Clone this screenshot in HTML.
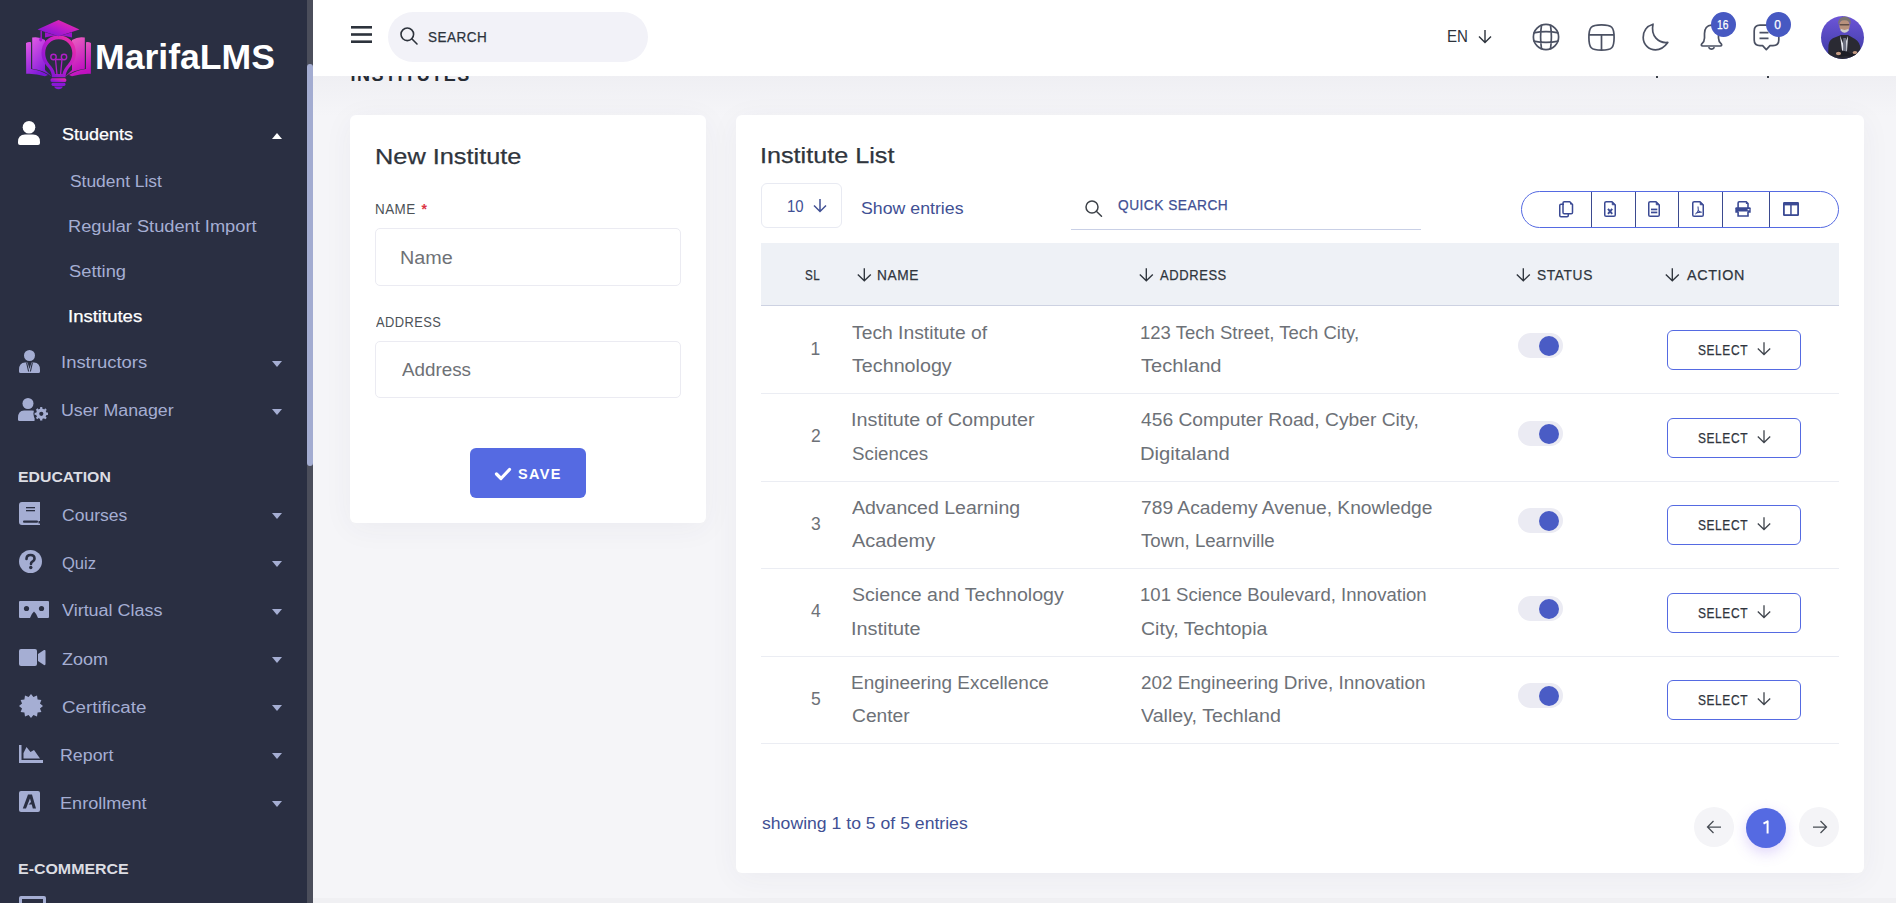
<!DOCTYPE html>
<html><head><meta charset="utf-8"><title>Institutes</title>
<style>
html,body{margin:0;padding:0;}
body{width:1896px;height:903px;position:relative;overflow:hidden;background:#f5f5f8;font-family:"Liberation Sans", sans-serif;}
.t{position:absolute;white-space:nowrap;}
svg{display:block;overflow:visible}
</style></head><body>
<div style="position:absolute;left:313px;top:76px;width:1583px;height:827px;background:#f5f5f8"></div>
<div style="position:absolute;left:313px;top:76px;width:1583px;height:40px;background:linear-gradient(#efeff3,rgba(245,245,248,0))"></div>
<div style="position:absolute;left:313px;top:898px;width:1583px;height:5px;background:#f0f0f3"></div>
<div style="position:absolute;left:0px;top:0px;width:307px;height:903px;background:#2a2f42"></div>
<div style="position:absolute;left:307px;top:0px;width:6px;height:903px;background:#4b4e5b"></div>
<div style="position:absolute;left:307px;top:64px;width:6px;height:402px;background:#a3acd1;border-radius:3px"></div>
<svg style="position:absolute;left:15px;top:10px;" width="90" height="90" viewBox="0 0 900 900">
<defs>
<linearGradient id="lg1" x1="0" y1="1" x2="1" y2="0"><stop offset="0" stop-color="#6c14d8"/><stop offset="0.55" stop-color="#c21cc8"/><stop offset="1" stop-color="#f5349c"/></linearGradient>
<linearGradient id="lg2" x1="0" y1="0" x2="0.6" y2="1"><stop offset="0" stop-color="#e25ae6"/><stop offset="1" stop-color="#7a16d8"/></linearGradient>
<linearGradient id="lg3" x1="0" y1="0" x2="0.3" y2="1"><stop offset="0" stop-color="#f06ac0"/><stop offset="1" stop-color="#c010c0"/></linearGradient>
</defs>
<path d="M110 330 Q130 318 160 322 L160 590 Q250 598 330 650 L300 662 Q200 632 112 638 Z" fill="url(#lg2)"/>
<path d="M760 330 Q740 318 710 322 L710 590 Q620 598 540 650 L570 662 Q670 632 758 638 Z" fill="url(#lg3)"/>
<path d="M172 275 Q240 262 300 300 L300 600 Q330 630 370 668 Q280 600 172 588 Z" fill="url(#lg2)"/>
<path d="M698 275 Q630 262 570 300 L570 600 Q540 630 500 668 Q590 600 698 588 Z" fill="url(#lg3)"/>
<path d="M435 255 C330 255 265 330 265 430 C265 500 300 540 335 580 C360 610 368 640 370 672 L505 672 C507 640 515 610 540 580 C575 540 610 500 610 430 C610 330 540 255 435 255 Z" fill="url(#lg1)"/>
<path d="M437 292 C360 292 302 350 302 430 C302 490 330 525 360 560 C385 590 395 615 400 640 L475 640 C480 615 490 590 515 560 C545 525 573 490 573 430 C573 350 515 292 437 292 Z" fill="#2a2f42"/>
<circle cx="385" cy="470" r="27" fill="none" stroke="#b01ec8" stroke-width="14"/>
<circle cx="490" cy="470" r="27" fill="none" stroke="#b01ec8" stroke-width="14"/>
<path d="M405 492 L420 650 M470 492 L455 650 M410 495 L465 495" fill="none" stroke="#b01ec8" stroke-width="13"/>
<rect x="355" y="682" width="158" height="38" rx="16" fill="url(#lg1)"/>
<rect x="365" y="728" width="140" height="32" rx="14" fill="#8a18d6"/>
<path d="M392 766 L478 766 Q470 792 435 792 Q400 792 392 766 Z" fill="#8a18d6"/>
<path d="M225 195 L435 100 L645 195 L435 262 Z" fill="url(#lg1)"/>
<path d="M300 222 L300 275 Q435 235 570 275 L570 222 L435 262 Z" fill="#9c14cc"/>
<path d="M262 210 L262 282" stroke="#a018d0" stroke-width="14"/>
<ellipse cx="258" cy="296" rx="16" ry="20" fill="#a018d0"/>
</svg>
<div class="t" style="left:94.97px;top:39.43px;font-size:35px;line-height:35px;color:#fff;font-weight:700;letter-spacing:0px;transform:scaleX(1.0166);transform-origin:0 0;">MarifaLMS</div>
<svg style="position:absolute;left:18px;top:121px;" width="22" height="24" viewBox="0 0 22 24"><circle cx="11" cy="6.3" r="6.3" fill="#fff"/><path d="M0 21 Q0 13.5 7 13.5 L15 13.5 Q22 13.5 22 21 L22 22 Q22 24 20 24 L2 24 Q0 24 0 22Z" fill="#fff"/></svg>
<div class="t" style="left:62.00px;top:126.71px;font-size:16px;line-height:16px;color:#fff;font-weight:400;letter-spacing:0px;transform:scaleX(1.1242);transform-origin:0 0;-webkit-text-stroke:0.25px currentColor;">Students</div>
<svg style="position:absolute;left:272px;top:132.5px;" width="10" height="6" viewBox="0 0 10 6"><path d="M0 6 L5 0 L10 6Z" fill="#fff"/></svg>
<div class="t" style="left:69.50px;top:173.71px;font-size:16px;line-height:16px;color:#a5aed3;font-weight:400;letter-spacing:0px;transform:scaleX(1.0875);transform-origin:0 0;">Student List</div>
<div class="t" style="left:67.86px;top:219.31px;font-size:16px;line-height:16px;color:#a5aed3;font-weight:400;letter-spacing:0px;transform:scaleX(1.1396);transform-origin:0 0;">Regular Student Import</div>
<div class="t" style="left:69.00px;top:264.31px;font-size:16px;line-height:16px;color:#a5aed3;font-weight:400;letter-spacing:0px;transform:scaleX(1.1449);transform-origin:0 0;">Setting</div>
<div class="t" style="left:67.84px;top:309.41px;font-size:16px;line-height:16px;color:#fff;font-weight:400;letter-spacing:0px;transform:scaleX(1.1582);transform-origin:0 0;-webkit-text-stroke:0.25px currentColor;">Institutes</div>
<svg style="position:absolute;left:19px;top:350px;" width="21" height="23" viewBox="0 0 21 23"><circle cx="10.5" cy="5.5" r="5.5" fill="#a5aed3"/><path d="M0 20 Q0 12.5 6 12.5 L8.5 12.5 L10.5 19 L12.5 12.5 L15 12.5 Q21 12.5 21 20 L21 21.5 Q21 23 19.5 23 L1.5 23 Q0 23 0 21.5Z" fill="#a5aed3"/><path d="M7.6 12.6 L9.6 21.5 M13.4 12.6 L11.4 21.5" stroke="#2a2f42" stroke-width="1.1"/></svg>
<div class="t" style="left:60.55px;top:354.71px;font-size:16px;line-height:16px;color:#a5aed3;font-weight:400;letter-spacing:0px;transform:scaleX(1.1535);transform-origin:0 0;">Instructors</div>
<svg style="position:absolute;left:272px;top:360.5px;" width="10" height="6" viewBox="0 0 10 6"><path d="M0 0 L5 6 L10 0Z" fill="#a5aed3"/></svg>
<svg style="position:absolute;left:18px;top:398px;" width="31" height="23" viewBox="0 0 31 23"><circle cx="10" cy="5.5" r="5.5" fill="#a5aed3"/><path d="M0 20 Q0 12.5 6 12.5 L14 12.5 Q16 12.5 17 13.2 L16.5 23 L1.5 23 Q0 23 0 21.5Z" fill="#a5aed3"/><circle cx="23.3" cy="15.8" r="7.9" fill="#2a2f42"/><polygon points="29.87,17.11 28.36,16.98 28.32,17.15 28.28,17.31 28.22,17.47 28.17,17.63 28.10,17.79 28.04,17.95 27.96,18.10 27.89,18.25 27.80,18.40 27.72,18.55 27.62,18.69 28.75,19.70 28.62,19.88 28.48,20.05 28.34,20.22 28.19,20.38 28.04,20.54 27.88,20.69 27.72,20.84 27.55,20.98 27.38,21.12 27.20,21.25 27.02,21.37 26.05,20.22 25.90,20.30 25.75,20.39 25.60,20.46 25.45,20.54 25.29,20.60 25.13,20.67 24.97,20.72 24.81,20.78 24.65,20.82 24.48,20.86 24.31,20.90 24.39,22.41 24.17,22.44 23.96,22.47 23.74,22.49 23.52,22.50 23.30,22.50 23.08,22.50 22.86,22.49 22.64,22.47 22.43,22.44 22.21,22.41 21.99,22.37 22.12,20.86 21.95,20.82 21.79,20.78 21.63,20.72 21.47,20.67 21.31,20.60 21.15,20.54 21.00,20.46 20.85,20.39 20.70,20.30 20.55,20.22 20.41,20.12 19.40,21.25 19.22,21.12 19.05,20.98 18.88,20.84 18.72,20.69 18.56,20.54 18.41,20.38 18.26,20.22 18.12,20.05 17.98,19.88 17.85,19.70 18.98,18.69 18.88,18.55 18.80,18.40 18.71,18.25 18.64,18.10 18.56,17.95 18.50,17.79 18.43,17.63 18.38,17.47 18.32,17.31 18.28,17.15 18.24,16.98 18.20,16.81 16.69,16.89 16.66,16.67 16.63,16.46 16.61,16.24 16.60,16.02 16.60,15.80 16.60,15.58 16.61,15.36 16.63,15.14 16.66,14.93 16.69,14.71 18.20,14.79 18.24,14.62 18.28,14.45 18.32,14.29 18.38,14.13 18.43,13.97 18.50,13.81 18.56,13.65 18.64,13.50 18.71,13.35 18.80,13.20 18.88,13.05 18.98,12.91 17.85,11.90 17.98,11.72 18.12,11.55 18.26,11.38 18.41,11.22 18.56,11.06 18.72,10.91 18.88,10.76 19.05,10.62 19.22,10.48 19.40,10.35 19.58,10.23 20.55,11.38 20.70,11.30 20.85,11.21 21.00,11.14 21.15,11.06 21.31,11.00 21.47,10.93 21.63,10.88 21.79,10.82 21.95,10.78 22.12,10.74 21.99,9.23 22.21,9.19 22.43,9.16 22.64,9.13 22.86,9.11 23.08,9.10 23.30,9.10 23.52,9.10 23.74,9.11 23.96,9.13 24.17,9.16 24.39,9.19 24.31,10.70 24.48,10.74 24.65,10.78 24.81,10.82 24.97,10.88 25.13,10.93 25.29,11.00 25.45,11.06 25.60,11.14 25.75,11.21 25.90,11.30 26.05,11.38 26.19,11.48 27.20,10.35 27.38,10.48 27.55,10.62 27.72,10.76 27.88,10.91 28.04,11.06 28.19,11.22 28.34,11.38 28.48,11.55 28.62,11.72 28.75,11.90 27.62,12.91 27.72,13.05 27.80,13.20 27.89,13.35 27.96,13.50 28.04,13.65 28.10,13.81 28.17,13.97 28.22,14.13 28.28,14.29 28.32,14.45 28.36,14.62 29.87,14.49 29.91,14.71 29.94,14.93 29.97,15.14 29.99,15.36 30.00,15.58 30.00,15.80 30.00,16.02 29.99,16.24 29.97,16.46 29.94,16.67 29.91,16.89" fill="#a5aed3"/><circle cx="23.3" cy="15.8" r="2.1" fill="#2a2f42"/></svg>
<div class="t" style="left:60.59px;top:403.11px;font-size:16px;line-height:16px;color:#a5aed3;font-weight:400;letter-spacing:0px;transform:scaleX(1.1114);transform-origin:0 0;">User Manager</div>
<svg style="position:absolute;left:272px;top:408.5px;" width="10" height="6" viewBox="0 0 10 6"><path d="M0 0 L5 6 L10 0Z" fill="#a5aed3"/></svg>
<div class="t" style="left:17.87px;top:469.31px;font-size:15.4px;line-height:15.4px;color:#dcdde3;font-weight:700;letter-spacing:0px;transform:scaleX(1.0277);transform-origin:0 0;">EDUCATION</div>
<svg style="position:absolute;left:19px;top:502px;" width="21" height="23" viewBox="0 0 21 23"><path d="M3 0 L21 0 L21 19 L19.5 19 L19.5 21.5 L21 21.5 L21 23 L3 23 Q0 23 0 20 L0 3 Q0 0 3 0Z" fill="#a5aed3"/><rect x="4" y="18.5" width="15" height="2.2" rx="1" fill="#2a2f42"/><rect x="7" y="5" width="9" height="1.3" fill="#2a2f42"/><rect x="7" y="8" width="9" height="1.3" fill="#2a2f42"/></svg>
<div class="t" style="left:61.70px;top:507.71px;font-size:16px;line-height:16px;color:#a5aed3;font-weight:400;letter-spacing:0px;transform:scaleX(1.0960);transform-origin:0 0;">Courses</div>
<svg style="position:absolute;left:272px;top:513px;" width="10" height="6" viewBox="0 0 10 6"><path d="M0 0 L5 6 L10 0Z" fill="#a5aed3"/></svg>
<svg style="position:absolute;left:19px;top:550px;" width="23" height="23" viewBox="0 0 23 23"><circle cx="11.5" cy="11.5" r="11.5" fill="#a5aed3"/><path d="M7.5 9 Q7.5 5 11.5 5 Q15.5 5 15.5 8.5 Q15.5 10.5 13 11.8 Q12 12.4 12 14" fill="none" stroke="#2a2f42" stroke-width="2.6" stroke-linecap="round"/><circle cx="11.8" cy="17.5" r="1.7" fill="#2a2f42"/></svg>
<div class="t" style="left:61.70px;top:555.71px;font-size:16px;line-height:16px;color:#a5aed3;font-weight:400;letter-spacing:0px;transform:scaleX(1.0335);transform-origin:0 0;">Quiz</div>
<svg style="position:absolute;left:272px;top:561px;" width="10" height="6" viewBox="0 0 10 6"><path d="M0 0 L5 6 L10 0Z" fill="#a5aed3"/></svg>
<svg style="position:absolute;left:18.5px;top:601px;" width="30" height="17" viewBox="0 0 30 17"><path d="M1 0 L29 0 Q30 0 30 1 L30 16 Q30 17 29 17 L19 17 Q17 12 15 10.5 Q13 12 11 17 L1 17 Q0 17 0 16 L0 1 Q0 0 1 0Z" fill="#a5aed3"/><circle cx="7.5" cy="7.5" r="2.6" fill="#2a2f42"/><circle cx="22.5" cy="7.5" r="2.6" fill="#2a2f42"/></svg>
<div class="t" style="left:61.70px;top:603.31px;font-size:16px;line-height:16px;color:#a5aed3;font-weight:400;letter-spacing:0px;transform:scaleX(1.1227);transform-origin:0 0;">Virtual Class</div>
<svg style="position:absolute;left:272px;top:609px;" width="10" height="6" viewBox="0 0 10 6"><path d="M0 0 L5 6 L10 0Z" fill="#a5aed3"/></svg>
<svg style="position:absolute;left:18.5px;top:649px;" width="27" height="17" viewBox="0 0 27 17"><rect x="0" y="0" width="18" height="17" rx="2" fill="#a5aed3"/><path d="M19 5 L25 1 Q26.5 0.5 26.5 2 L26.5 15 Q26.5 16.5 25 16 L19 12Z" fill="#a5aed3"/></svg>
<div class="t" style="left:61.70px;top:651.71px;font-size:16px;line-height:16px;color:#a5aed3;font-weight:400;letter-spacing:0px;transform:scaleX(1.1240);transform-origin:0 0;">Zoom</div>
<svg style="position:absolute;left:272px;top:657px;" width="10" height="6" viewBox="0 0 10 6"><path d="M0 0 L5 6 L10 0Z" fill="#a5aed3"/></svg>
<svg style="position:absolute;left:18.5px;top:693.5px;" width="24" height="24" viewBox="0 0 24 24"><polygon points="12.00,0.00 14.41,3.02 18.00,1.61 18.58,5.42 22.39,6.00 20.98,9.59 24.00,12.00 20.98,14.41 22.39,18.00 18.58,18.58 18.00,22.39 14.41,20.98 12.00,24.00 9.59,20.98 6.00,22.39 5.42,18.58 1.61,18.00 3.02,14.41 0.00,12.00 3.02,9.59 1.61,6.00 5.42,5.42 6.00,1.61 9.59,3.02" fill="#a5aed3"/></svg>
<div class="t" style="left:61.50px;top:700.01px;font-size:16px;line-height:16px;color:#a5aed3;font-weight:400;letter-spacing:0px;transform:scaleX(1.1716);transform-origin:0 0;">Certificate</div>
<svg style="position:absolute;left:272px;top:705px;" width="10" height="6" viewBox="0 0 10 6"><path d="M0 0 L5 6 L10 0Z" fill="#a5aed3"/></svg>
<svg style="position:absolute;left:18.5px;top:745px;" width="24" height="18" viewBox="0 0 24 18"><path d="M0 0 L2.5 0 L2.5 15 L24 15 L24 18 L0 18Z" fill="#a5aed3"/><path d="M4.5 13.5 L4.5 8 L7.5 2 L11.5 7 L15 5 L21 13.5Z" fill="#a5aed3"/></svg>
<div class="t" style="left:60.39px;top:748.21px;font-size:16px;line-height:16px;color:#a5aed3;font-weight:400;letter-spacing:0px;transform:scaleX(1.1140);transform-origin:0 0;">Report</div>
<svg style="position:absolute;left:272px;top:753px;" width="10" height="6" viewBox="0 0 10 6"><path d="M0 0 L5 6 L10 0Z" fill="#a5aed3"/></svg>
<svg style="position:absolute;left:18.5px;top:791px;" width="21" height="21" viewBox="0 0 21 21"><rect x="0" y="0" width="21" height="21" rx="2" fill="#a5aed3"/><path d="M9 3.5 L13 3.5 L17 17.5 L13.8 17.5 L12.8 13.5 L9.5 13.5 L12 11 L11 7.5 L7 17.5 L3.8 17.5Z" fill="#2a2f42"/></svg>
<div class="t" style="left:60.37px;top:796.31px;font-size:16px;line-height:16px;color:#a5aed3;font-weight:400;letter-spacing:0px;transform:scaleX(1.1311);transform-origin:0 0;">Enrollment</div>
<svg style="position:absolute;left:272px;top:801px;" width="10" height="6" viewBox="0 0 10 6"><path d="M0 0 L5 6 L10 0Z" fill="#a5aed3"/></svg>
<div class="t" style="left:17.96px;top:861.31px;font-size:15.4px;line-height:15.4px;color:#dcdde3;font-weight:700;letter-spacing:0px;transform:scaleX(1.0359);transform-origin:0 0;">E-COMMERCE</div>
<svg style="position:absolute;left:18.5px;top:896px;" width="27" height="10" viewBox="0 0 27 10"><rect x="0" y="0" width="27" height="20" rx="2" fill="#a5aed3"/><rect x="3" y="3" width="21" height="14" fill="#2a2f42"/></svg>
<div style="position:absolute;left:313px;top:0px;width:1583px;height:76px;background:#fff"></div>
<svg style="position:absolute;left:351px;top:26px;" width="21" height="17" viewBox="0 0 21 17"><rect x="0" y="0" width="21" height="2.6" fill="#2d333c"/><rect x="0" y="7.2" width="21" height="2.6" fill="#2d333c"/><rect x="0" y="14.4" width="21" height="2.6" fill="#2d333c"/></svg>
<div style="position:absolute;left:388px;top:12px;width:260px;height:49.5px;background:#f2f2f8;border-radius:25px"></div>
<svg style="position:absolute;left:400px;top:27px;" width="18" height="18" viewBox="0 0 18 18"><circle cx="7.3" cy="7.3" r="6.3" fill="none" stroke="#2d333c" stroke-width="1.6"/><path d="M11.8 11.8 L17 17" stroke="#2d333c" stroke-width="1.6" stroke-linecap="round"/></svg>
<div class="t" style="left:427.80px;top:30.06px;font-size:14.5px;line-height:14.5px;color:#2d333c;font-weight:400;letter-spacing:0.5px;transform:scaleX(0.9318);transform-origin:0 0;-webkit-text-stroke:0.25px currentColor;">SEARCH</div>
<div class="t" style="left:1447.26px;top:28.51px;font-size:16px;line-height:16px;color:#2d333c;font-weight:400;letter-spacing:0px;transform:scaleX(0.9433);transform-origin:0 0;">EN</div>
<svg style="position:absolute;left:1477px;top:29px;" width="16" height="15" viewBox="0 0 16 15"><path d="M8 1 L8 13.5 M2 7.5 L8 13.5 L14 7.5" fill="none" stroke="#2d333c" stroke-width="1.4"/></svg>
<svg style="position:absolute;left:1532px;top:23px;" width="28" height="28" viewBox="0 0 28 28"><g fill="none" stroke="#4b5163" stroke-width="1.7"><circle cx="14" cy="14" r="12.6"/><path d="M9.6 1.6 Q7.6 14 9.6 26.4 M18.4 1.6 Q20.4 14 18.4 26.4 M1.6 9.8 Q14 7.4 26.4 9.8 M1.6 18.2 Q14 20.6 26.4 18.2"/></g></svg>
<svg style="position:absolute;left:1587.5px;top:23.5px;" width="27" height="27" viewBox="0 0 27 27"><g fill="none" stroke="#4b5163" stroke-width="1.7"><path d="M13.5 0.9 C3 0.9 0.9 3 0.9 13.5 C0.9 24 3 26.1 13.5 26.1 C24 26.1 26.1 24 26.1 13.5 C26.1 3 24 0.9 13.5 0.9Z"/><path d="M0.9 10.9 L26.1 10.9 M13.5 10.9 L13.5 26.1"/></g></svg>
<svg style="position:absolute;left:1642px;top:23px;" width="27" height="28" viewBox="0 0 27 28"><path d="M11 1.2 C4.5 3 1.2 8.5 1.2 14.5 C1.2 21.5 7 26.8 13.5 26.8 C18.5 26.8 22.5 24 25.8 19.4 C16.5 20.5 8.5 13 11 1.2Z" fill="none" stroke="#4b5163" stroke-width="1.7" stroke-linejoin="round"/></svg>
<svg style="position:absolute;left:1699.5px;top:23.5px;" width="23" height="27" viewBox="0 0 23 27"><g fill="none" stroke="#4b5163" stroke-width="1.7" stroke-linejoin="round"><path d="M11.5 1.2 C7 1.2 4.5 4.8 4.5 9.5 L4.5 14 Q4.5 17.5 1.8 19.8 Q0.5 21.8 2.8 22 L20.2 22 Q22.5 21.8 21.2 19.8 Q18.5 17.5 18.5 14 L18.5 9.5 C18.5 4.8 16 1.2 11.5 1.2Z"/><path d="M8.5 23.3 Q11.5 27 14.5 23.3"/></g></svg>
<div style="position:absolute;left:1711px;top:12px;width:25px;height:25px;background:#4759c2;border-radius:50%"></div>
<div class="t" style="left:1717.40px;top:18.83px;font-size:12px;line-height:12px;color:#fff;font-weight:400;letter-spacing:0px;transform:scaleX(0.8483);transform-origin:0 0;-webkit-text-stroke:0.25px currentColor;">16</div>
<svg style="position:absolute;left:1752.5px;top:23.5px;" width="27" height="27" viewBox="0 0 27 27"><g fill="none" stroke="#4b5163" stroke-width="1.7" stroke-linejoin="round"><path d="M7 1.2 L20 1.2 Q25.8 1.2 25.8 7 L25.8 16 Q25.8 21.6 20 21.6 L17 21.6 L13.3 25.6 L9.6 21.6 L7 21.6 Q1.2 21.6 1.2 16 L1.2 7 Q1.2 1.2 7 1.2Z"/><path d="M6.5 8.6 L15.5 8.6 M6.5 14.3 L15.5 14.3"/></g></svg>
<div style="position:absolute;left:1766px;top:12px;width:25px;height:25px;background:#4759c2;border-radius:50%"></div>
<div class="t" style="left:1774.30px;top:18.83px;font-size:12px;line-height:12px;color:#fff;font-weight:400;letter-spacing:0px;-webkit-text-stroke:0.25px currentColor;">0</div>
<svg style="position:absolute;left:1821px;top:15.5px;" width="43" height="43" viewBox="0 0 43 43"><defs><linearGradient id="av" x1="0" y1="0" x2="0" y2="1"><stop offset="0" stop-color="#6d55d8"/><stop offset="1" stop-color="#3b3aa2"/></linearGradient><clipPath id="avc"><circle cx="21.5" cy="21.5" r="21.5"/></clipPath></defs>
<circle cx="21.5" cy="21.5" r="21.5" fill="url(#av)"/>
<g clip-path="url(#avc)">
<path d="M7 43 L7.5 29 Q8 23 15 21 L20 19 L27 19 L34 23 Q39 26 39.5 33 L40 43Z" fill="#2a2a33"/>
<path d="M19 19.5 L23 30 L27 20 L26 35 L21.5 38Z" fill="#e4e6ee"/>
<path d="M22.3 22 L25 22 L25.5 38 L23.5 40 L22 37Z" fill="#6d7080"/>
<path d="M15 36 Q20 33 27 36 L30 38 Q33 35 36 37 L34 41 Q28 41 25 40 L18 41Z" fill="#1e1e26"/>
<ellipse cx="17.5" cy="37.5" rx="2.6" ry="1.8" fill="#c49a82"/>
<ellipse cx="34" cy="36.5" rx="2.4" ry="1.6" fill="#c49a82"/>
</g>
<ellipse cx="23.5" cy="9.5" rx="5.2" ry="6.8" fill="#b8917c"/>
<path d="M19.5 14.5 Q23.5 19 27.8 14.5 L27.5 12.8 Q23.5 15 19.8 12.8Z" fill="#cfcfcf"/>
<path d="M17.5 9 Q16 1.5 23.5 0.5 Q31 1 29.8 9 Q28.5 4 23.5 4.2 Q18.5 4 17.5 9Z" fill="#7a7470"/>
<rect x="18.5" y="8" width="10" height="1.6" rx="0.8" fill="#3a3030" opacity="0.7"/>
</svg>
<div style="position:absolute;left:313px;top:76px;width:1583px;height:30px;overflow:hidden">
<div class="t" style="left:37.40px;top:-10.25px;font-size:18px;line-height:18px;color:#262b33;font-weight:700;letter-spacing:1.55px;">INSTITUTES</div>
</div>
<div style="position:absolute;left:1656px;top:76px;width:2px;height:1.5px;background:#3a3f48"></div>
<div style="position:absolute;left:1767px;top:76px;width:2px;height:1.5px;background:#3a3f48"></div>
<div style="position:absolute;left:350px;top:115px;width:356px;height:408px;background:#fff;border-radius:6px;box-shadow:0 5px 30px rgba(60,60,100,0.05)"></div>
<div class="t" style="left:374.85px;top:145.83px;font-size:22px;line-height:22px;color:#2f353d;font-weight:400;letter-spacing:0px;transform:scaleX(1.1514);transform-origin:0 0;-webkit-text-stroke:0.25px currentColor;">New Institute</div>
<div class="t" style="left:375.09px;top:201.91px;font-size:14.8px;line-height:14.8px;color:#4c5257;font-weight:400;letter-spacing:0.5px;transform:scaleX(0.9082);transform-origin:0 0;">NAME</div>
<div class="t" style="left:421.50px;top:201.74px;font-size:15px;line-height:15px;color:#dc3545;font-weight:700;letter-spacing:0px;font-size:14px">*</div>
<div style="position:absolute;left:375px;top:228px;width:306px;height:58px;border:1px solid #ebebf2;border-radius:5px;box-sizing:border-box"></div>
<div class="t" style="left:400.30px;top:248.55px;font-size:18px;line-height:18px;color:#6e7176;font-weight:400;letter-spacing:0px;transform:scaleX(1.0978);transform-origin:0 0;">Name</div>
<div class="t" style="left:375.50px;top:315.01px;font-size:14.8px;line-height:14.8px;color:#4c5257;font-weight:400;letter-spacing:0.5px;transform:scaleX(0.8705);transform-origin:0 0;">ADDRESS</div>
<div style="position:absolute;left:375px;top:341px;width:306px;height:57px;border:1px solid #ebebf2;border-radius:5px;box-sizing:border-box"></div>
<div class="t" style="left:401.50px;top:361.35px;font-size:18px;line-height:18px;color:#6e7176;font-weight:400;letter-spacing:0px;transform:scaleX(1.0449);transform-origin:0 0;">Address</div>
<div style="position:absolute;left:470px;top:448px;width:116px;height:50px;background:#556ae2;border-radius:6px"></div>
<svg style="position:absolute;left:495px;top:468px;" width="16" height="12" viewBox="0 0 16 12"><path d="M1.5 6 L6 10.5 L14.5 1.5" fill="none" stroke="#fff" stroke-width="3.2" stroke-linecap="round" stroke-linejoin="round"/></svg>
<div class="t" style="left:518.00px;top:466.96px;font-size:14.5px;line-height:14.5px;color:#fff;font-weight:700;letter-spacing:1.3px;">SAVE</div>
<div style="position:absolute;left:736px;top:115px;width:1128px;height:758px;background:#fff;border-radius:6px;box-shadow:0 5px 30px rgba(60,60,100,0.05)"></div>
<div class="t" style="left:759.66px;top:145.21px;font-size:22.5px;line-height:22.5px;color:#2f353d;font-weight:400;letter-spacing:0px;transform:scaleX(1.1195);transform-origin:0 0;-webkit-text-stroke:0.25px currentColor;">Institute List</div>
<div style="position:absolute;left:761px;top:183px;width:81px;height:45px;border:1px solid #e8eaf2;border-radius:6px;box-sizing:border-box"></div>
<div class="t" style="left:786.94px;top:198.23px;font-size:17.3px;line-height:17.3px;color:#415094;font-weight:400;letter-spacing:0px;transform:scaleX(0.8631);transform-origin:0 0;">10</div>
<svg style="position:absolute;left:812px;top:198px;" width="16" height="15" viewBox="0 0 16 15"><path d="M8 1 L8 13.5 M2 7.5 L8 13.5 L14 7.5" fill="none" stroke="#415094" stroke-width="1.5"/></svg>
<div class="t" style="left:861.40px;top:200.28px;font-size:17px;line-height:17px;color:#415094;font-weight:400;letter-spacing:0px;transform:scaleX(1.0432);transform-origin:0 0;">Show entries</div>
<svg style="position:absolute;left:1085px;top:199.5px;" width="18" height="17" viewBox="0 0 18 17"><circle cx="7" cy="7" r="6" fill="none" stroke="#3d4248" stroke-width="1.5"/><path d="M11.3 11.3 L16.5 16.3" stroke="#3d4248" stroke-width="1.5" stroke-linecap="round"/></svg>
<div class="t" style="left:1118.00px;top:197.96px;font-size:14.5px;line-height:14.5px;color:#415094;font-weight:400;letter-spacing:0.5px;transform:scaleX(0.9471);transform-origin:0 0;-webkit-text-stroke:0.25px currentColor;">QUICK SEARCH</div>
<div style="position:absolute;left:1071px;top:228.5px;width:350px;height:1px;background:#c9d0e6"></div>
<div style="position:absolute;left:1521px;top:191px;width:318px;height:37px;border:1px solid #556ae2;border-radius:19px;box-sizing:border-box"></div>
<div style="position:absolute;left:1591px;top:192px;width:1px;height:35px;background:#3b4a8f"></div>
<div style="position:absolute;left:1635px;top:192px;width:1px;height:35px;background:#3b4a8f"></div>
<div style="position:absolute;left:1678px;top:192px;width:1px;height:35px;background:#3b4a8f"></div>
<div style="position:absolute;left:1722px;top:192px;width:1px;height:35px;background:#3b4a8f"></div>
<div style="position:absolute;left:1769px;top:192px;width:1px;height:35px;background:#3b4a8f"></div>
<svg style="position:absolute;left:1559px;top:201px;" width="15" height="16.5" viewBox="0 0 15 16.5"><path d="M5 3.2 H2 Q0.75 3.2 0.75 4.5 V14.6 Q0.75 15.8 2 15.8 H8 Q9.3 15.8 9.3 14.6 V12.8" fill="none" stroke="#3b4a94" stroke-width="1.5" stroke-linejoin="round"/><path d="M5.3 0.75 H10.8 L13.5 3.5 V11.4 Q13.5 12.7 12.2 12.7 H5.3 Q4 12.7 4 11.4 V2.05 Q4 0.75 5.3 0.75Z" fill="none" stroke="#3b4a94" stroke-width="1.5" stroke-linejoin="round"/><path d="M11 0.9 L11 3.4 L13.4 3.4Z" fill="#3b4a94"/></svg>
<svg style="position:absolute;left:1604.4px;top:201px;" width="12.5" height="16.5" viewBox="0 0 12.5 16.5"><path d="M2.3 0.75 H8 L11.25 4 V13.9 Q11.25 15.25 9.9 15.25 H2.1 Q0.75 15.25 0.75 13.9 V2.1 Q0.75 0.75 2.3 0.75Z" fill="none" stroke="#3b4a94" stroke-width="1.5" stroke-linejoin="round"/><path d="M8.2 0.9 L8.2 3.8 L11.1 3.8Z" fill="#3b4a94" stroke="#3b4a94" stroke-width="0.8"/><path d="M4 7.8 L8.2 12.8 M8.2 7.8 L4 12.8" stroke="#3b4a94" stroke-width="1.9"/></svg>
<svg style="position:absolute;left:1647.9px;top:201px;" width="12.5" height="16.5" viewBox="0 0 12.5 16.5"><path d="M2.3 0.75 H8 L11.25 4 V13.9 Q11.25 15.25 9.9 15.25 H2.1 Q0.75 15.25 0.75 13.9 V2.1 Q0.75 0.75 2.3 0.75Z" fill="none" stroke="#3b4a94" stroke-width="1.5" stroke-linejoin="round"/><path d="M8.2 0.9 L8.2 3.8 L11.1 3.8Z" fill="#3b4a94" stroke="#3b4a94" stroke-width="0.8"/><rect x="3" y="7.6" width="6.3" height="1.7" fill="#3b4a94"/><rect x="3" y="10.6" width="6.3" height="1.7" fill="#3b4a94"/></svg>
<svg style="position:absolute;left:1691.8px;top:201px;" width="12.5" height="16.5" viewBox="0 0 12.5 16.5"><path d="M2.3 0.75 H8 L11.25 4 V13.9 Q11.25 15.25 9.9 15.25 H2.1 Q0.75 15.25 0.75 13.9 V2.1 Q0.75 0.75 2.3 0.75Z" fill="none" stroke="#3b4a94" stroke-width="1.5" stroke-linejoin="round"/><path d="M8.2 0.9 L8.2 3.8 L11.1 3.8Z" fill="#3b4a94" stroke="#3b4a94" stroke-width="0.8"/><path d="M6 5.5 Q6.8 9.5 5.5 11 Q4.5 12.8 3 13 M6.3 9.5 Q7.5 11 9.8 11.2 Q7 11 4 12" fill="none" stroke="#3b4a94" stroke-width="1.1"/></svg>
<svg style="position:absolute;left:1735.4px;top:201px;" width="16" height="16" viewBox="0 0 16 16"><path d="M3.1 7 V1.9 Q3.1 0.8 4.2 0.8 H11.2 L13 2.6 V7" fill="none" stroke="#3b4a94" stroke-width="1.6"/><path d="M10.9 1 L10.9 3 L12.9 3Z" fill="#3b4a94"/><path d="M1.3 6.2 H14.7 Q15.7 6.2 15.7 7.2 V11.7 H0.3 V7.2 Q0.3 6.2 1.3 6.2Z" fill="#3b4a94"/><rect x="12.6" y="8.1" width="1.8" height="1.2" fill="#fff"/><path d="M3.1 10.5 V15 H13 V10.5" fill="#fff" stroke="#3b4a94" stroke-width="1.6"/></svg>
<svg style="position:absolute;left:1782.9px;top:202px;" width="16" height="14" viewBox="0 0 16 14"><rect x="0" y="0" width="16" height="14" rx="1.2" fill="#3b4a94"/><rect x="1.8" y="3.4" width="5.4" height="8.8" fill="#fff"/><rect x="8.7" y="3.4" width="5.5" height="8.8" fill="#fff"/></svg>
<div style="position:absolute;left:761px;top:243px;width:1078px;height:63px;background:#eef1f6;border-bottom:1px solid #cdd2e2;box-sizing:border-box"></div>
<div class="t" style="left:804.90px;top:267.33px;font-size:15.5px;line-height:15.5px;color:#2f353d;font-weight:400;letter-spacing:0.7px;transform:scaleX(0.7486);transform-origin:0 0;-webkit-text-stroke:0.25px currentColor;">SL</div>
<svg style="position:absolute;left:857px;top:267.8px;" width="15" height="14" viewBox="0 0 15 14"><path d="M7.3 0.3 L7.3 12.8 M0.8 6.4 L7.3 12.8 L13.8 6.4" fill="none" stroke="#2f353d" stroke-width="1.35"/></svg>
<div class="t" style="left:877.02px;top:267.33px;font-size:15.5px;line-height:15.5px;color:#2f353d;font-weight:400;letter-spacing:0.7px;transform:scaleX(0.8849);transform-origin:0 0;-webkit-text-stroke:0.25px currentColor;">NAME</div>
<svg style="position:absolute;left:1139px;top:267.8px;" width="15" height="14" viewBox="0 0 15 14"><path d="M7.3 0.3 L7.3 12.8 M0.8 6.4 L7.3 12.8 L13.8 6.4" fill="none" stroke="#2f353d" stroke-width="1.35"/></svg>
<div class="t" style="left:1160.00px;top:267.33px;font-size:15.5px;line-height:15.5px;color:#2f353d;font-weight:400;letter-spacing:0.7px;transform:scaleX(0.8376);transform-origin:0 0;-webkit-text-stroke:0.25px currentColor;">ADDRESS</div>
<svg style="position:absolute;left:1516px;top:267.8px;" width="15" height="14" viewBox="0 0 15 14"><path d="M7.3 0.3 L7.3 12.8 M0.8 6.4 L7.3 12.8 L13.8 6.4" fill="none" stroke="#2f353d" stroke-width="1.35"/></svg>
<div class="t" style="left:1537.00px;top:267.33px;font-size:15.5px;line-height:15.5px;color:#2f353d;font-weight:400;letter-spacing:0.7px;transform:scaleX(0.8870);transform-origin:0 0;-webkit-text-stroke:0.25px currentColor;">STATUS</div>
<svg style="position:absolute;left:1665px;top:267.8px;" width="15" height="14" viewBox="0 0 15 14"><path d="M7.3 0.3 L7.3 12.8 M0.8 6.4 L7.3 12.8 L13.8 6.4" fill="none" stroke="#2f353d" stroke-width="1.35"/></svg>
<div class="t" style="left:1686.50px;top:267.33px;font-size:15.5px;line-height:15.5px;color:#2f353d;font-weight:400;letter-spacing:0.7px;transform:scaleX(0.9250);transform-origin:0 0;-webkit-text-stroke:0.25px currentColor;">ACTION</div>
<div style="position:absolute;left:761px;top:393px;width:1078px;height:1px;background:#ebedf3"></div>
<div class="t" style="left:810.50px;top:340.57px;font-size:17.5px;line-height:17.5px;color:#6d7177;font-weight:400;letter-spacing:0px;">1</div>
<div class="t" style="left:852.30px;top:324.77px;font-size:17.5px;line-height:17.5px;color:#6d7177;font-weight:400;letter-spacing:0px;transform:scaleX(1.1026);transform-origin:0 0;">Tech Institute of</div>
<div class="t" style="left:852.30px;top:357.97px;font-size:17.5px;line-height:17.5px;color:#6d7177;font-weight:400;letter-spacing:0px;transform:scaleX(1.1263);transform-origin:0 0;">Technology</div>
<div class="t" style="left:1139.94px;top:324.77px;font-size:17.5px;line-height:17.5px;color:#6d7177;font-weight:400;letter-spacing:0px;transform:scaleX(1.0574);transform-origin:0 0;">123 Tech Street, Tech City,</div>
<div class="t" style="left:1141.00px;top:357.97px;font-size:17.5px;line-height:17.5px;color:#6d7177;font-weight:400;letter-spacing:0px;transform:scaleX(1.1498);transform-origin:0 0;">Techland</div>
<div style="position:absolute;left:1518px;top:333px;width:45px;height:25px;background:#ebebf3;border-radius:13px"></div>
<div style="position:absolute;left:1538.5px;top:336px;width:20px;height:20px;background:#4a5cc5;border-radius:50%"></div>
<div style="position:absolute;left:1667px;top:330px;width:134px;height:40px;border:1.3px solid #556ae2;border-radius:6px;box-sizing:border-box"></div>
<div class="t" style="left:1697.50px;top:343.07px;font-size:14px;line-height:14px;color:#2f353d;font-weight:400;letter-spacing:0.7px;transform:scaleX(0.8526);transform-origin:0 0;-webkit-text-stroke:0.25px currentColor;">SELECT</div>
<svg style="position:absolute;left:1757px;top:342px;" width="14" height="14" viewBox="0 0 14 14"><path d="M7 0.3 L7 12.5 M0.8 6.5 L7 12.5 L13.2 6.5" fill="none" stroke="#40454d" stroke-width="1.3"/></svg>
<div style="position:absolute;left:761px;top:481px;width:1078px;height:1px;background:#ebedf3"></div>
<div class="t" style="left:811.00px;top:428.12px;font-size:17.5px;line-height:17.5px;color:#6d7177;font-weight:400;letter-spacing:0px;">2</div>
<div class="t" style="left:851.17px;top:412.32px;font-size:17.5px;line-height:17.5px;color:#6d7177;font-weight:400;letter-spacing:0px;transform:scaleX(1.1305);transform-origin:0 0;">Institute of Computer</div>
<div class="t" style="left:852.30px;top:445.52px;font-size:17.5px;line-height:17.5px;color:#6d7177;font-weight:400;letter-spacing:0px;transform:scaleX(1.0722);transform-origin:0 0;">Sciences</div>
<div class="t" style="left:1141.00px;top:412.32px;font-size:17.5px;line-height:17.5px;color:#6d7177;font-weight:400;letter-spacing:0px;transform:scaleX(1.0997);transform-origin:0 0;">456 Computer Road, Cyber City,</div>
<div class="t" style="left:1139.85px;top:445.52px;font-size:17.5px;line-height:17.5px;color:#6d7177;font-weight:400;letter-spacing:0px;transform:scaleX(1.1538);transform-origin:0 0;">Digitaland</div>
<div style="position:absolute;left:1518px;top:421px;width:45px;height:25px;background:#ebebf3;border-radius:13px"></div>
<div style="position:absolute;left:1538.5px;top:424px;width:20px;height:20px;background:#4a5cc5;border-radius:50%"></div>
<div style="position:absolute;left:1667px;top:418px;width:134px;height:40px;border:1.3px solid #556ae2;border-radius:6px;box-sizing:border-box"></div>
<div class="t" style="left:1697.50px;top:430.62px;font-size:14px;line-height:14px;color:#2f353d;font-weight:400;letter-spacing:0.7px;transform:scaleX(0.8526);transform-origin:0 0;-webkit-text-stroke:0.25px currentColor;">SELECT</div>
<svg style="position:absolute;left:1757px;top:430px;" width="14" height="14" viewBox="0 0 14 14"><path d="M7 0.3 L7 12.5 M0.8 6.5 L7 12.5 L13.2 6.5" fill="none" stroke="#40454d" stroke-width="1.3"/></svg>
<div style="position:absolute;left:761px;top:568px;width:1078px;height:1px;background:#ebedf3"></div>
<div class="t" style="left:811.00px;top:515.67px;font-size:17.5px;line-height:17.5px;color:#6d7177;font-weight:400;letter-spacing:0px;">3</div>
<div class="t" style="left:852.30px;top:499.87px;font-size:17.5px;line-height:17.5px;color:#6d7177;font-weight:400;letter-spacing:0px;transform:scaleX(1.1148);transform-origin:0 0;">Advanced Learning</div>
<div class="t" style="left:852.30px;top:533.07px;font-size:17.5px;line-height:17.5px;color:#6d7177;font-weight:400;letter-spacing:0px;transform:scaleX(1.1394);transform-origin:0 0;">Academy</div>
<div class="t" style="left:1141.00px;top:499.87px;font-size:17.5px;line-height:17.5px;color:#6d7177;font-weight:400;letter-spacing:0px;transform:scaleX(1.0987);transform-origin:0 0;">789 Academy Avenue, Knowledge</div>
<div class="t" style="left:1141.00px;top:533.07px;font-size:17.5px;line-height:17.5px;color:#6d7177;font-weight:400;letter-spacing:0px;transform:scaleX(1.0653);transform-origin:0 0;">Town, Learnville</div>
<div style="position:absolute;left:1518px;top:508px;width:45px;height:25px;background:#ebebf3;border-radius:13px"></div>
<div style="position:absolute;left:1538.5px;top:511px;width:20px;height:20px;background:#4a5cc5;border-radius:50%"></div>
<div style="position:absolute;left:1667px;top:505px;width:134px;height:40px;border:1.3px solid #556ae2;border-radius:6px;box-sizing:border-box"></div>
<div class="t" style="left:1697.50px;top:518.17px;font-size:14px;line-height:14px;color:#2f353d;font-weight:400;letter-spacing:0.7px;transform:scaleX(0.8526);transform-origin:0 0;-webkit-text-stroke:0.25px currentColor;">SELECT</div>
<svg style="position:absolute;left:1757px;top:517px;" width="14" height="14" viewBox="0 0 14 14"><path d="M7 0.3 L7 12.5 M0.8 6.5 L7 12.5 L13.2 6.5" fill="none" stroke="#40454d" stroke-width="1.3"/></svg>
<div style="position:absolute;left:761px;top:656px;width:1078px;height:1px;background:#ebedf3"></div>
<div class="t" style="left:811.00px;top:603.22px;font-size:17.5px;line-height:17.5px;color:#6d7177;font-weight:400;letter-spacing:0px;">4</div>
<div class="t" style="left:852.30px;top:587.42px;font-size:17.5px;line-height:17.5px;color:#6d7177;font-weight:400;letter-spacing:0px;transform:scaleX(1.1181);transform-origin:0 0;">Science and Technology</div>
<div class="t" style="left:851.16px;top:620.62px;font-size:17.5px;line-height:17.5px;color:#6d7177;font-weight:400;letter-spacing:0px;transform:scaleX(1.1352);transform-origin:0 0;">Institute</div>
<div class="t" style="left:1139.94px;top:587.42px;font-size:17.5px;line-height:17.5px;color:#6d7177;font-weight:400;letter-spacing:0px;transform:scaleX(1.0598);transform-origin:0 0;">101 Science Boulevard, Innovation</div>
<div class="t" style="left:1141.00px;top:620.62px;font-size:17.5px;line-height:17.5px;color:#6d7177;font-weight:400;letter-spacing:0px;transform:scaleX(1.1174);transform-origin:0 0;">City, Techtopia</div>
<div style="position:absolute;left:1518px;top:596px;width:45px;height:25px;background:#ebebf3;border-radius:13px"></div>
<div style="position:absolute;left:1538.5px;top:599px;width:20px;height:20px;background:#4a5cc5;border-radius:50%"></div>
<div style="position:absolute;left:1667px;top:593px;width:134px;height:40px;border:1.3px solid #556ae2;border-radius:6px;box-sizing:border-box"></div>
<div class="t" style="left:1697.50px;top:605.72px;font-size:14px;line-height:14px;color:#2f353d;font-weight:400;letter-spacing:0.7px;transform:scaleX(0.8526);transform-origin:0 0;-webkit-text-stroke:0.25px currentColor;">SELECT</div>
<svg style="position:absolute;left:1757px;top:605px;" width="14" height="14" viewBox="0 0 14 14"><path d="M7 0.3 L7 12.5 M0.8 6.5 L7 12.5 L13.2 6.5" fill="none" stroke="#40454d" stroke-width="1.3"/></svg>
<div style="position:absolute;left:761px;top:743px;width:1078px;height:1px;background:#ebedf3"></div>
<div class="t" style="left:811.00px;top:690.77px;font-size:17.5px;line-height:17.5px;color:#6d7177;font-weight:400;letter-spacing:0px;">5</div>
<div class="t" style="left:851.22px;top:674.97px;font-size:17.5px;line-height:17.5px;color:#6d7177;font-weight:400;letter-spacing:0px;transform:scaleX(1.0819);transform-origin:0 0;">Engineering Excellence</div>
<div class="t" style="left:852.30px;top:708.17px;font-size:17.5px;line-height:17.5px;color:#6d7177;font-weight:400;letter-spacing:0px;transform:scaleX(1.0987);transform-origin:0 0;">Center</div>
<div class="t" style="left:1141.00px;top:674.97px;font-size:17.5px;line-height:17.5px;color:#6d7177;font-weight:400;letter-spacing:0px;transform:scaleX(1.0794);transform-origin:0 0;">202 Engineering Drive, Innovation</div>
<div class="t" style="left:1141.00px;top:708.17px;font-size:17.5px;line-height:17.5px;color:#6d7177;font-weight:400;letter-spacing:0px;transform:scaleX(1.1232);transform-origin:0 0;">Valley, Techland</div>
<div style="position:absolute;left:1518px;top:683px;width:45px;height:25px;background:#ebebf3;border-radius:13px"></div>
<div style="position:absolute;left:1538.5px;top:686px;width:20px;height:20px;background:#4a5cc5;border-radius:50%"></div>
<div style="position:absolute;left:1667px;top:680px;width:134px;height:40px;border:1.3px solid #556ae2;border-radius:6px;box-sizing:border-box"></div>
<div class="t" style="left:1697.50px;top:693.27px;font-size:14px;line-height:14px;color:#2f353d;font-weight:400;letter-spacing:0.7px;transform:scaleX(0.8526);transform-origin:0 0;-webkit-text-stroke:0.25px currentColor;">SELECT</div>
<svg style="position:absolute;left:1757px;top:692px;" width="14" height="14" viewBox="0 0 14 14"><path d="M7 0.3 L7 12.5 M0.8 6.5 L7 12.5 L13.2 6.5" fill="none" stroke="#40454d" stroke-width="1.3"/></svg>
<div class="t" style="left:761.50px;top:815.38px;font-size:17px;line-height:17px;color:#415094;font-weight:400;letter-spacing:0px;transform:scaleX(1.0366);transform-origin:0 0;">showing 1 to 5 of 5 entries</div>
<div style="position:absolute;left:1694px;top:807px;width:40px;height:40px;background:#f4f4f7;border-radius:50%"></div>
<svg style="position:absolute;left:1706px;top:820px;" width="16" height="14" viewBox="0 0 16 14"><path d="M15 7 L1.5 7 M7.5 1 L1.5 7 L7.5 13" fill="none" stroke="#474c54" stroke-width="1.25"/></svg>
<div style="position:absolute;left:1746px;top:808px;width:40px;height:40px;background:#556ae2;border-radius:50%;box-shadow:0 5px 14px rgba(130,90,240,0.25)"></div>
<svg style="position:absolute;left:1763px;top:821px;" width="6" height="12.5" viewBox="0 0 6 12.5"><path d="M0.5 2.6 L4.6 0.3 L4.6 12.5" fill="none" stroke="#fff" stroke-width="2" stroke-linejoin="round"/></svg>
<div style="position:absolute;left:1799px;top:807px;width:40px;height:40px;background:#f4f4f7;border-radius:50%"></div>
<svg style="position:absolute;left:1812px;top:820px;" width="16" height="14" viewBox="0 0 16 14"><path d="M1 7 L14.5 7 M8.5 1 L14.5 7 L8.5 13" fill="none" stroke="#474c54" stroke-width="1.25"/></svg>
</body></html>
